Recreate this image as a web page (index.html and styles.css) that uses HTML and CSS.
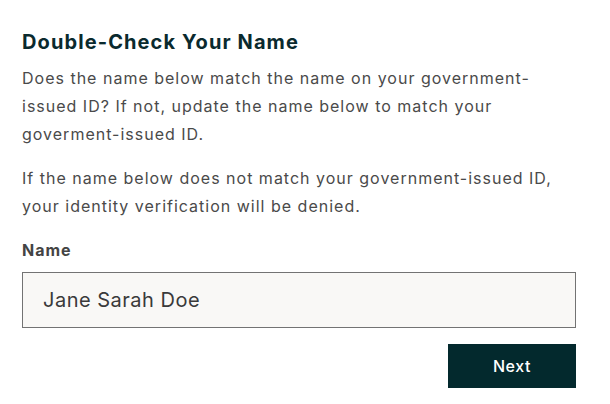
FILE: index.html
```html
<!DOCTYPE html>
<html lang="en">
<head>
<meta charset="utf-8">
<link rel="stylesheet" href="styles.css">
</head>
<body>
<main class="card">
  <h1 class="title">Double-Check Your Name</h1>
  <p class="text">Does the name below match the name on your government-issued ID? If not, update the name below to match your goverment-issued ID.</p>
  <p class="text text-second">If the name below does not match your government-issued ID, your identity verification will be denied.</p>
  <label class="label" for="name">Name</label>
  <input class="field" id="name" type="text" value="Jane Sarah Doe">
  <div class="actions">
    <button class="btn" type="button">Next</button>
  </div>
</main>
</body>
</html>
```
FILE: styles.css
```css
* { box-sizing: border-box; }
html, body { margin: 0; padding: 0; background: #ffffff; }
body {
  font-family: Inter, "Noto Sans", sans-serif;
  color: #4a4a4a;
}
.card {
  width: 554px;
  margin: 28px 0 0 22px;
  display: flex;
  flex-direction: column;
}
.title {
  margin: 0;
  font-size: 20px;
  line-height: 28px;
  font-weight: 700;
  letter-spacing: 1.1px;
  color: #0a2a2e;
}
.text {
  margin: 8px 0 0;
  font-size: 16px;
  line-height: 28px;
  letter-spacing: 1px;
  color: #4a4a4a;
}
.text-second { margin-top: 16px; }
.label {
  margin-top: 18px;
  font-size: 16px;
  line-height: 24px;
  font-weight: 700;
  letter-spacing: 1px;
  color: #444444;
}
.field {
  margin-top: 10px;
  height: 56px;
  width: 100%;
  border: 1px solid #737373;
  border-radius: 0;
  background: #f9f8f6;
  padding: 0 20px;
  font-family: Inter, "Noto Sans", sans-serif;
  font-size: 20px;
  letter-spacing: 0.5px;
  color: #3a3a3a;
  outline: none;
}
.actions {
  margin-top: 16px;
  display: flex;
  justify-content: flex-end;
}
.btn {
  width: 128px;
  height: 44px;
  border: 0;
  background: #03292d;
  color: #ffffff;
  font-family: Inter, "Noto Sans", sans-serif;
  font-size: 16px;
  font-weight: 500;
  letter-spacing: 0.6px;
  cursor: pointer;
}
```
